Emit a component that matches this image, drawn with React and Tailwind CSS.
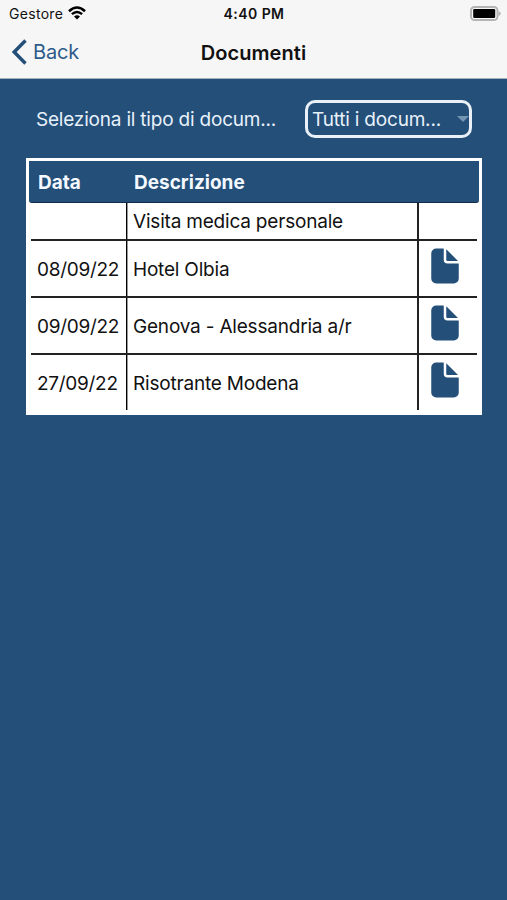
import { IoDocument } from 'react-icons/io5';

const documents = [
  { date: '', description: 'Visita medica personale', file: false },
  { date: '08/09/22', description: 'Hotel Olbia', file: true },
  { date: '09/09/22', description: 'Genova - Alessandria a/r', file: true },
  { date: '27/09/22', description: 'Risotrante Modena', file: true },
];

function StatusBar() {
  return (
    <div className="grid h-[27px] grid-cols-3 items-center pl-[9px] pr-[6px] text-[#111]">
      <div className="flex items-center gap-[5px]">
        <span className="text-[14px] tracking-[0.3px]">Gestore</span>
        <svg className="-mt-px h-[14px] w-[18px]" viewBox="0 0 18 14">
          <path d="M1 5.2Q9-2.2 17 5.2" fill="none" stroke="#000" strokeWidth="2.6" />
          <path d="M3.9 8.2Q9 3.6 14.1 8.2" fill="none" stroke="#000" strokeWidth="2.4" />
          <path d="M6 10.6Q9 8 12 10.6L9 13.6Z" fill="#000" />
        </svg>
      </div>
      <span className="-ml-[2px] text-center text-[14px] font-semibold tracking-[0.45px]">4:40 PM</span>
      <svg className="h-[15px] w-[31px] justify-self-end" viewBox="0 0 31 15">
        <rect x="1" y="1" width="26.5" height="13" rx="3.6" fill="#f6f6f6" stroke="#b4b4b4" strokeWidth="2" />
        <rect x="3.2" y="3" width="22" height="9" rx="1.2" fill="#000" />
        <path d="M28.5 5v5q2.3-1 2.3-2.5T28.5 5Z" fill="#b4b4b4" />
      </svg>
    </div>
  );
}

function NavBar() {
  return (
    <div className="grid h-[51px] grid-cols-3 items-center px-[12px]">
      <button className="-mt-[2px] flex items-center gap-[6px] text-left text-[#2f5b8b]">
        <svg className="h-[26px] w-[15px]" viewBox="0 0 15 26">
          <path d="M13.5 1.5L2.2 13l11.3 11.5" fill="none" stroke="#234f79" strokeWidth="3.4" />
        </svg>
        <span className="text-[20px] tracking-[-0.2px]">Back</span>
      </button>
      <h1 className="text-center text-[20px] font-semibold tracking-[0.05px] text-[#111]">Documenti</h1>
    </div>
  );
}

function DocumentRow({ doc, last }) {
  const height = last ? 'h-[55px]' : doc.file ? 'h-[57px] border-b-2' : 'h-[38px] border-b-2';

  return (
    <div className={`grid grid-cols-[95px_293px_1fr] border-[#222] text-[19px] text-[#111] ${height}`}>
      <div className="flex items-center whitespace-nowrap pl-[6px] pt-[3px] tracking-[-0.28px]">{doc.date}</div>
      <div className="flex items-center whitespace-nowrap border-l border-r-2 border-[#222] border-l-black pl-[6px] pt-[3px] tracking-[-0.2px] shadow-[inset_1px_0_0_#999]">
        {doc.description}
      </div>
      <div className="flex items-center pb-[5px] pl-[6px]">
        {doc.file && <IoDocument className="h-[40px] w-[40px] text-[#234f79]" />}
      </div>
    </div>
  );
}

export default function App() {
  return (
    <div className="flex h-[900px] w-[507px] flex-col bg-[#234f79] font-['Inter','Liberation_Sans',sans-serif]">
      <header className="h-[79px] border-b border-[#a3b1bf] bg-[#f6f6f6]">
        <StatusBar />
        <NavBar />
      </header>

      <main className="px-[26px] pt-[21px]">
        <div className="flex h-[38px] items-center justify-between pl-[10px] pr-[9px] text-[19px] text-[#e8f1fb]">
          <span className="whitespace-nowrap pt-[3px] tracking-[-0.2px]">Seleziona il tipo di docum...</span>
          <button className="flex h-[38px] w-[167px] items-center justify-between rounded-[10px] border-3 border-[#e9f0f8] pl-[4px] text-left">
            <span className="whitespace-nowrap pt-[3px] tracking-[-0.2px]">Tutti i docum...</span>
            <svg className="h-[6px] w-[12px]" viewBox="0 0 12 6">
              <path d="M0 0h12L6 6Z" fill="#7495b2" />
            </svg>
          </button>
        </div>

        <section className="mt-[20px] h-[257px] w-[456px] bg-white pl-[3px] pr-[3px] pt-[3px]">
          <div className="grid h-[42px] grid-cols-[96px_1fr] items-center rounded-b-[3px] border-b border-[#102c49] bg-[#234f79] pl-[9px] pt-[3px] text-[19px] font-bold text-[#f4f8ff]">
            <span>Data</span>
            <span>Descrizione</span>
          </div>
          <div className="pl-[2px] pr-[2px]">
            {documents.map((doc, i) => (
              <DocumentRow key={i} doc={doc} last={i === documents.length - 1} />
            ))}
          </div>
        </section>
      </main>
    </div>
  );
}
